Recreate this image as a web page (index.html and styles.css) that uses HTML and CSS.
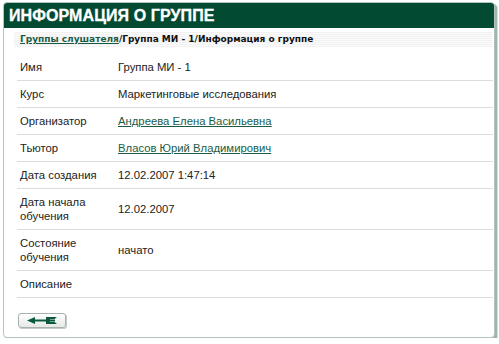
FILE: index.html
```html
<!DOCTYPE html>
<html>
<head>
  <meta charset="UTF-8">
  <title>Информация о группе</title>
  <link rel="stylesheet" href="styles.css">
</head>
<body>
  <div class="panel">
    <h1 class="title">ИНФОРМАЦИЯ О ГРУППЕ</h1>
    <div class="crumbs"><a href="#">Группы слушателя</a>/Группа МИ - 1/Информация о группе</div>

    <table class="info">
      <tr><td class="lbl">Имя</td><td>Группа МИ - 1</td></tr>
      <tr><td class="lbl">Курс</td><td>Маркетинговые исследования</td></tr>
      <tr><td class="lbl">Организатор</td><td><a href="#">Андреева Елена Васильевна</a></td></tr>
      <tr><td class="lbl">Тьютор</td><td><a href="#">Власов Юрий Владимирович</a></td></tr>
      <tr><td class="lbl">Дата создания</td><td>12.02.2007 1:47:14</td></tr>
      <tr class="tall"><td class="lbl">Дата начала<br>обучения</td><td>12.02.2007</td></tr>
      <tr class="tall"><td class="lbl">Состояние<br>обучения</td><td>начато</td></tr>
      <tr><td class="lbl">Описание</td><td></td></tr>
    </table>

    <button class="back" type="button" title="Назад">
      <svg width="34" height="9" viewBox="0 0 34 9">
        <path d="M2 4.5 L10 1 L10 3.5 L22 3.5 L22 5.5 L10 5.5 L10 8 Z" fill="#0b5a3c"/>
        <path d="M21 1 L32 1 L29.5 3 L25 3 L25 3.6 L30 3.6 L30 5.4 L25 5.4 L25 6 L29.5 6 L32 8 L21 8 Z" fill="#0b5a3c"/>
      </svg>
    </button>
  </div>
</body>
</html>
```
FILE: styles.css
```css
body {
  margin: 0;
  background: #fff;
  font-family: "Liberation Sans", Arial, sans-serif;
}
.panel {
  width: 492px;
  height: 336px;
  margin: 2px 0 0 3px;
  border: 1px solid #b3c4bd;
  border-radius: 4px;
  box-shadow: 2px 2px 0 #9fb4ab, 3px 3px 0 #d5dfdb;
  background: #fff;
  box-sizing: border-box;
}
.title {
  margin: 0;
  height: 25px;
  padding: 0 0 0 5px;
  background: #034a33;
  border-radius: 3px 3px 0 0;
  color: #fff;
  font-family: "Liberation Sans", Arial, sans-serif;
  font-size: 16px;
  font-weight: bold;
  line-height: 26px;
  letter-spacing: 0.1px;
  -webkit-text-stroke: 0.3px #fff;
}
.crumbs {
  margin: 4px 2px 0 10px;
  padding: 0 6px;
  height: 15px;
  line-height: 15px;
  background: repeating-linear-gradient(#f1f1f1 0, #f1f1f1 1px, #fbfbfb 1px, #fbfbfb 2px);
  font-family: "DejaVu Sans", Verdana, sans-serif;
  font-size: 9px;
  font-weight: bold;
  color: #111;
}
.crumbs a {
  color: #1c5c45;
}
.info {
  margin: 7px 2px 0 13px;
  width: 476px;
  border-collapse: collapse;
  font-size: 11.3px;
  color: #222;
}
.info td {
  height: 26px;
  padding: 0;
  border-bottom: 1px solid #d9dedb;
  vertical-align: middle;
}
.info tr.tall td {
  height: 40px;
  line-height: 14px;
}
.info td.lbl {
  width: 98px;
  padding-left: 3px;
}
.info a {
  color: #1c5c45;
}
.back {
  display: block;
  margin: 15px 0 0 14px;
  width: 48px;
  height: 15px;
  padding: 0;
  border: 1px solid #a8b2ad;
  border-radius: 3px;
  background: linear-gradient(#ffffff, #e6e9e7);
  box-shadow: 1px 1px 0 #c4ccc8;
  line-height: 0;
}
```
